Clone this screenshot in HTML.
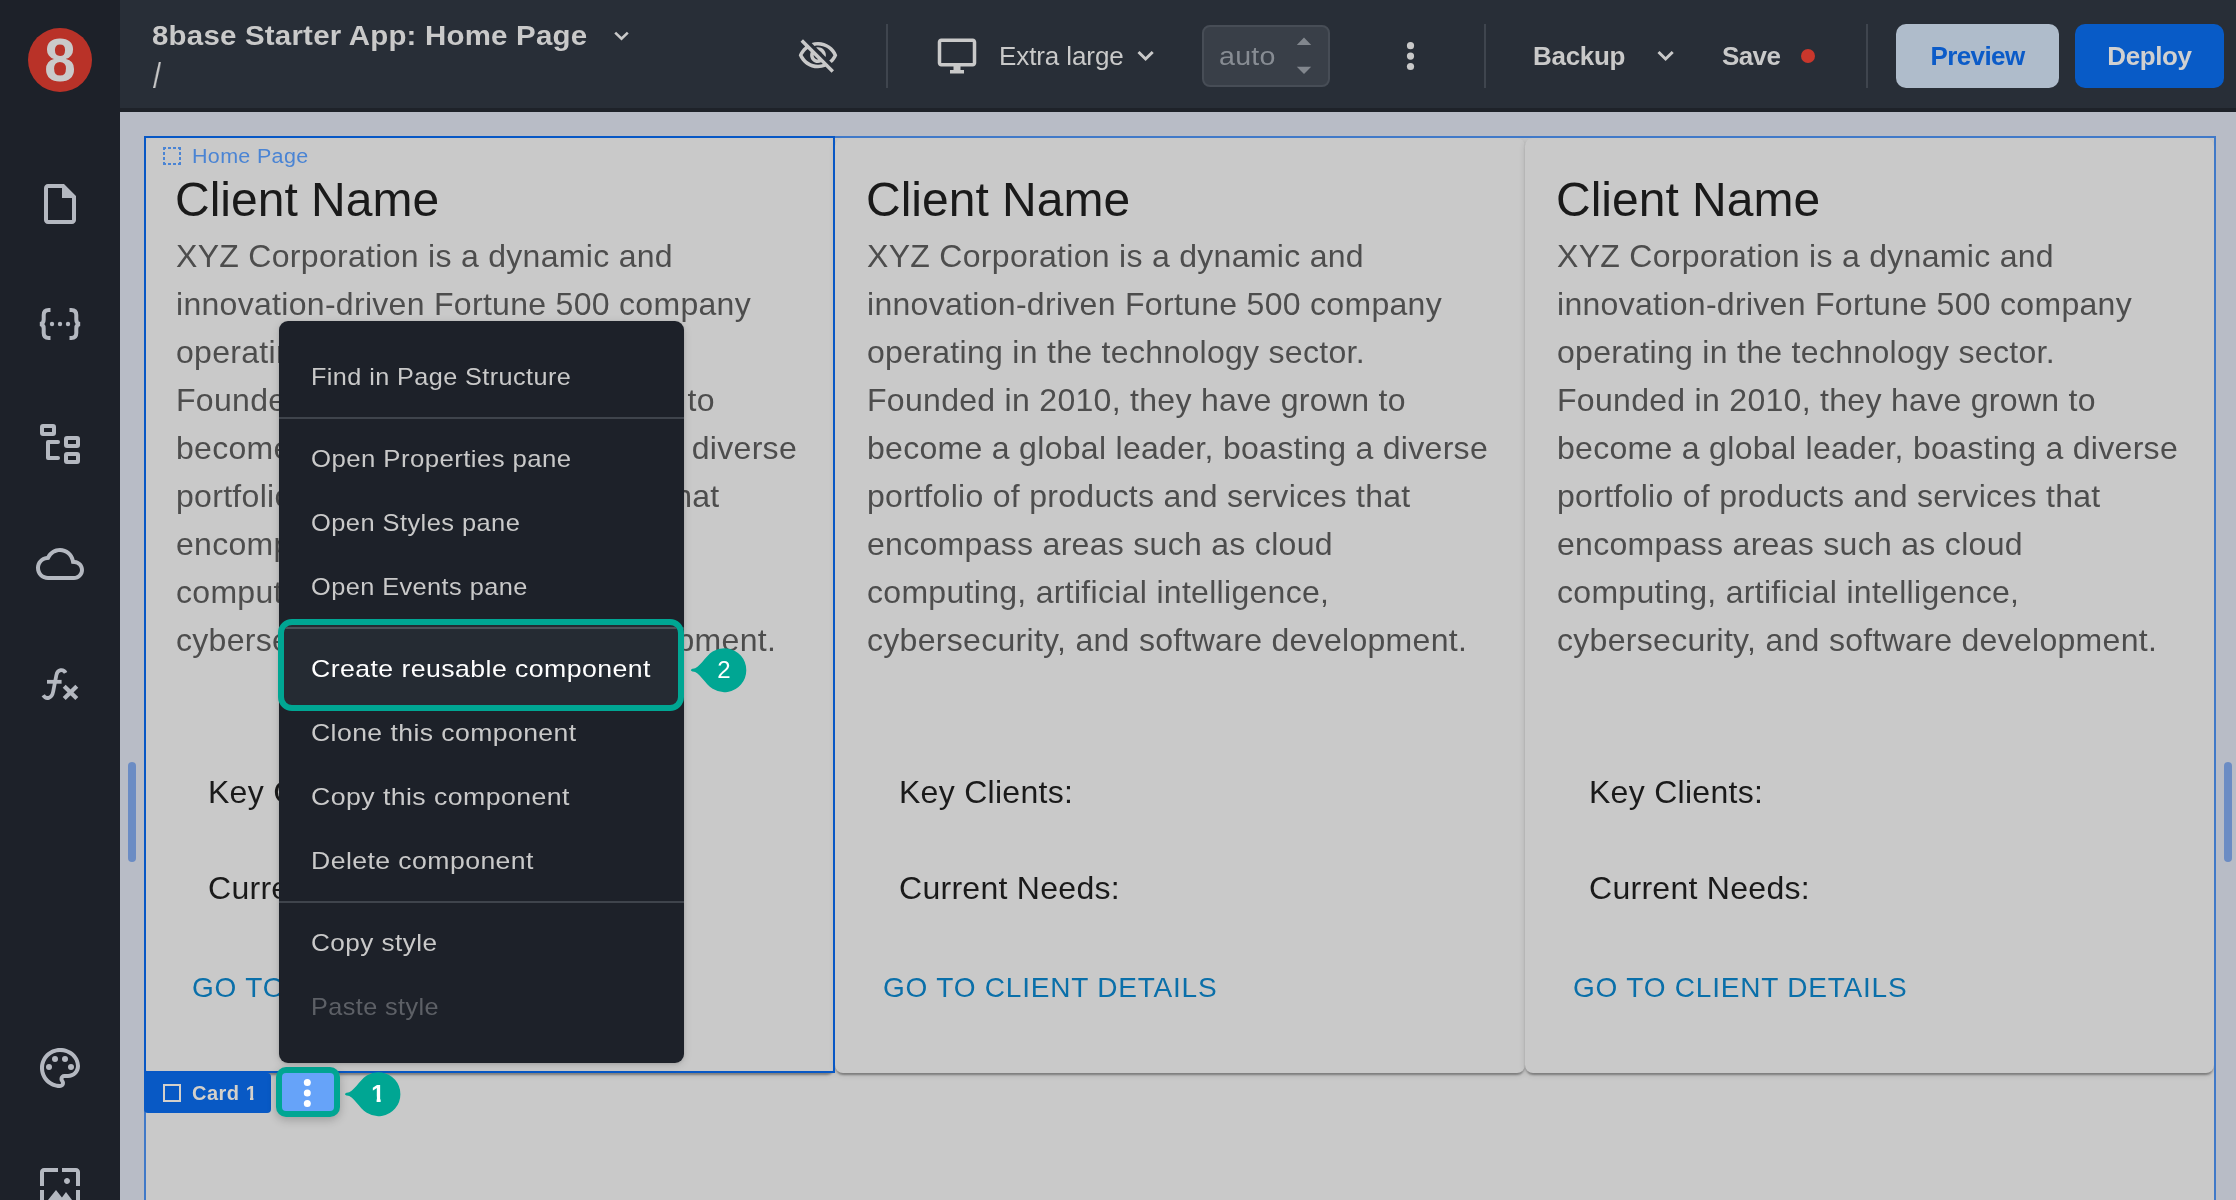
<!DOCTYPE html>
<html lang="en">
<head>
<meta charset="utf-8">
<title>8base Starter App: Home Page</title>
<style>
*{box-sizing:border-box;margin:0;padding:0}
html,body{width:2236px;height:1200px;overflow:hidden}
body{position:relative;background:#b8bcc6;font-family:"Liberation Sans",sans-serif;color:#c9c9c9}
#root{position:absolute;left:0;top:0;width:2236px;height:1200px;will-change:transform}
.abs{position:absolute}
svg{display:block;position:absolute;overflow:visible}
.t{position:absolute;white-space:nowrap;line-height:1}

/* sidebar */
#sidebar{position:absolute;left:0;top:0;width:120px;height:1200px;background:#1d2129}
#logo{position:absolute;left:28px;top:28px;width:64px;height:64px;border-radius:50%;background:#b93228}
#logo span{position:absolute;left:0;width:64px;text-align:center;top:1.5px;font-weight:bold;font-size:61px;line-height:61px;color:#cacaca;transform:scaleX(.93)}

/* topbar */
#topbar{position:absolute;left:120px;top:0;width:2116px;height:112px;background:#282e37;border-bottom:4px solid #1e2229}
.vdiv{position:absolute;top:24px;width:2px;height:64px;background:#3f454e}

/* canvas */
#page{position:absolute;left:144px;top:136px;width:2072px;height:1100px;background:#c9c9c9;border:2px solid #4079c8;overflow:hidden}
.card{position:absolute;top:0;height:935px;background:#c9c9c9;border-radius:8px;box-shadow:0 4px 2px -2px rgba(0,0,0,.2),0 2px 2px 0 rgba(0,0,0,.15),0 2px 6px 0 rgba(0,0,0,.12)}
.card h5{position:absolute;left:31px;top:34px;font-weight:normal;font-size:48px;line-height:56px;color:#1a1a1a;white-space:nowrap}
.card p.body{position:absolute;left:32px;top:94px;width:640px;font-size:32px;line-height:48px;letter-spacing:.3px;color:#4d4d4d;white-space:nowrap}
.card .kv{position:absolute;left:64px;font-size:32px;line-height:48px;letter-spacing:.28px;color:#1a1a1a;white-space:nowrap}
.card .btn{position:absolute;left:48px;top:826px;font-size:28px;line-height:48px;letter-spacing:.8px;color:#0a6fa9;white-space:nowrap}

.one{display:inline-block;line-height:1em;vertical-align:baseline;clip-path:polygon(0 0,.39em 0,.39em 1em,.22em 1em,.22em .6em,0 .6em)}
/* menu */
#menu{position:absolute;left:279px;top:321px;width:405px;height:742px;background:#1d2129;border-radius:9px;box-shadow:0 2px 8px rgba(0,0,0,.13),0 1px 3px rgba(0,0,0,.10);padding:24px 0}
#menu .mi{height:64px;padding-left:32px;font-size:24px;line-height:64px;letter-spacing:.4px;color:#c9c9c9;white-space:nowrap}
#menu .mi span,.hl span{display:inline-block;transform-origin:0 50%}
#menu .mi.dis{color:#5d6066}
#menu .sep{height:2px;margin:8px 0;background:#3f444c}
</style>
</head>
<body>
<div id="root">

<!-- ============ CANVAS ============ -->
<div id="page">

<div class="card" id="c1" style="left:-2px;width:691px">
  <h5>Client Name</h5>
  <p class="body">XYZ Corporation is a dynamic and<br>innovation-driven Fortune 500 company<br>operating in the technology sector.<br>Founded in 2010, they have grown to<br>become a global leader, boasting a diverse<br>portfolio of products and services that<br>encompass areas such as cloud<br>computing, artificial intelligence,<br>cybersecurity, and software development.</p>
  <div class="kv" style="top:630px">Key Clients:</div>
  <div class="kv" style="top:726px">Current Needs:</div>
  <div class="btn">GO TO CLIENT DETAILS</div>
</div>
<div class="card" id="c2" style="left:689px;width:690px">
  <h5>Client Name</h5>
  <p class="body">XYZ Corporation is a dynamic and<br>innovation-driven Fortune 500 company<br>operating in the technology sector.<br>Founded in 2010, they have grown to<br>become a global leader, boasting a diverse<br>portfolio of products and services that<br>encompass areas such as cloud<br>computing, artificial intelligence,<br>cybersecurity, and software development.</p>
  <div class="kv" style="top:630px">Key Clients:</div>
  <div class="kv" style="top:726px">Current Needs:</div>
  <div class="btn">GO TO CLIENT DETAILS</div>
</div>
<div class="card" id="c3" style="left:1379px;width:689px">
  <h5>Client Name</h5>
  <p class="body">XYZ Corporation is a dynamic and<br>innovation-driven Fortune 500 company<br>operating in the technology sector.<br>Founded in 2010, they have grown to<br>become a global leader, boasting a diverse<br>portfolio of products and services that<br>encompass areas such as cloud<br>computing, artificial intelligence,<br>cybersecurity, and software development.</p>
  <div class="kv" style="top:630px">Key Clients:</div>
  <div class="kv" style="top:726px">Current Needs:</div>
  <div class="btn">GO TO CLIENT DETAILS</div>
</div>

</div>
<!-- selection outline of card 1 -->
<div class="abs" style="left:144px;top:136px;width:691px;height:937px;border:2px solid #0757c5"></div>



<!-- resize handles -->
<div class="abs" style="left:128px;top:762px;width:8px;height:100px;border-radius:4px;background:#6b8cc4"></div>
<div class="abs" style="left:2224px;top:762px;width:8px;height:100px;border-radius:4px;background:#6b8cc4"></div>

<!-- page label -->
<svg style="left:163px;top:147px" width="18" height="18" viewBox="0 0 18 18" fill="none" stroke="#4a84d4" stroke-width="2" stroke-dasharray="3 2"><path d="M0 1H18"/><path d="M0 17H18"/><path d="M1 0V18"/><path d="M17 0V18"/></svg>
<div class="t" style="left:192px;top:144px;font-size:20px;line-height:24px;letter-spacing:.3px;color:#4a84d4;transform:scaleX(1.075);transform-origin:0 50%">Home Page</div>

<!-- ============ CARD LABEL ============ -->
<div class="abs" style="left:144px;top:1073px;width:127px;height:40px;background:#0859c5;border-radius:0 4px 4px 4px"></div>
<div class="abs" style="left:163px;top:1084px;width:18px;height:18px;border:2px solid #d4d0ca"></div>
<div class="t" style="left:192px;top:1081px;font-weight:bold;font-size:20px;line-height:24px;letter-spacing:.5px;color:#d4d0ca">Card <span class="one">1</span></div>

<!-- dots button highlighted (step 1) -->
<div class="abs" style="left:276px;top:1067px;width:64px;height:50px;border-radius:10px;background:#00a693;box-shadow:0 3px 10px rgba(0,0,0,.22)"></div>
<div class="abs" style="left:282px;top:1073px;width:52px;height:38px;border-radius:4px;background:#66a3f9"></div>
<svg style="left:300px;top:1076px" width="16" height="34" viewBox="0 0 16 34" fill="#ffffff"><circle cx="7.300" cy="6.500" r="3.500"/><circle cx="7.300" cy="17" r="3.500"/><circle cx="7.300" cy="27.500" r="3.500"/></svg>

<!-- badge 1 -->
<svg style="left:340px;top:1066px" width="66" height="56" viewBox="340 1066 66 56"><path fill="#00a693" d="M366.74 1075.54C359.10 1080.30 352.90 1093.50 346.40 1092.80Q343.50 1094.20 346.40 1095.60C352.90 1094.90 359.10 1108.10 366.74 1112.86A22 22 0 1 0 366.74 1075.54Z"/></svg>
<div class="t" style="left:356px;width:44px;text-align:center;top:1082px;font-size:24px;line-height:24px;color:#fff;font-weight:bold"><span class="one">1</span></div>

<!-- ============ CONTEXT MENU ============ -->
<div id="menu">
  <div class="mi"><span style="transform:scaleX(1.051)">Find in Page Structure</span></div>
  <div class="sep"></div>
  <div class="mi"><span style="transform:scaleX(1.073)">Open Properties pane</span></div>
  <div class="mi"><span style="transform:scaleX(1.061)">Open Styles pane</span></div>
  <div class="mi"><span style="transform:scaleX(1.056)">Open Events pane</span></div>
  <div class="sep"></div>
  <div class="mi" style="color:#fff"><span style="transform:scaleX(1.110)">Create reusable component</span></div>
  <div class="mi"><span style="transform:scaleX(1.106)">Clone this component</span></div>
  <div class="mi"><span style="transform:scaleX(1.111)">Copy this component</span></div>
  <div class="mi"><span style="transform:scaleX(1.108)">Delete component</span></div>
  <div class="sep"></div>
  <div class="mi"><span style="transform:scaleX(1.090)">Copy style</span></div>
  <div class="mi dis"><span style="transform:scaleX(1.051)">Paste style</span></div>
</div>

<!-- highlight (step 2) -->
<div class="abs" style="left:278px;top:619px;width:406px;height:92px;border:6px solid #00a693;border-radius:14px;background:#252b33;overflow:hidden">
  <div class="abs" style="left:0;top:2px;width:394px;height:2px;background:#4c5159"></div>
  <div class="t hl" style="left:27px;top:12px;font-size:24px;line-height:64px;letter-spacing:.4px;color:#fff"><span style="transform:scaleX(1.110)">Create reusable component</span></div>
</div>
<!-- badge 2 -->
<svg style="left:686px;top:642px" width="66" height="56" viewBox="686 642 66 56"><path fill="#00a693" d="M712.64 651.54C705.00 656.30 698.80 669.50 692.30 668.80Q689.40 670.20 692.30 671.60C698.80 670.90 705.00 684.10 712.64 688.86A22 22 0 1 0 712.64 651.54Z"/></svg>
<div class="t" style="left:702px;width:44px;text-align:center;top:658px;font-size:24px;line-height:24px;color:#fff">2</div>

<!-- ============ SIDEBAR / TOPBAR ============ -->
<div id="sidebar">
  <div id="logo"><span>8</span></div>
  <!-- file -->
  <svg style="left:36px;top:180px" width="48" height="48" viewBox="0 0 24 24" fill="#b4b8c0"><path d="M14 2H6c-1.1 0-1.990.9-1.990 2L4 20c0 1.100.89 2 1.990 2H18c1.100 0 2-.9 2-2V8l-6-6zM6 20V4h7v5h5v11H6z"/></svg>
  <!-- data object -->
  <svg style="left:0;top:0" width="120" height="1200" viewBox="0 0 120 1200" fill="none" stroke="#b4b8c0" stroke-width="4">
    <path d="M50.500 310H48.700Q43.700 310 43.700 315V319.500Q43.700 324 39.800 324Q43.700 324 43.700 328.500V333Q43.700 338 48.700 338H50.500"/>
    <path d="M69.500 310H71.300Q76.300 310 76.300 315V319.500Q76.300 324 80.200 324Q76.300 324 76.300 328.500V333Q76.300 338 71.300 338H69.500"/>
    <g fill="#b4b8c0" stroke="none"><circle cx="52" cy="324" r="2.200"/><circle cx="60" cy="324" r="2.200"/><circle cx="68" cy="324" r="2.200"/></g>
  </svg>
  <!-- tree -->
  <svg style="left:0;top:0" width="120" height="1200" viewBox="0 0 120 1200" fill="none" stroke="#b4b8c0" stroke-width="4" stroke-linejoin="round" stroke-linecap="round">
    <rect x="42" y="426" width="12" height="8" rx="1"/>
    <rect x="66" y="438" width="12" height="8" rx="1"/>
    <rect x="66" y="454" width="12" height="8" rx="1"/>
    <path d="M58 442H48V458H58"/>
  </svg>
  <!-- cloud -->
  <svg style="left:36px;top:540px" width="48" height="48" viewBox="0 0 24 24" fill="#b4b8c0"><path d="M12 6c2.620 0 4.880 1.860 5.390 4.430l.3 1.500 1.530.11c1.560.1 2.780 1.410 2.780 2.960 0 1.650-1.350 3-3 3H6c-2.210 0-4-1.790-4-4 0-2.050 1.530-3.760 3.560-3.970l1.070-.11.5-.95C8.080 7.140 9.940 6 12 6m0-2C9.110 4 6.600 5.640 5.350 8.040 2.340 8.360 0 10.910 0 14c0 3.310 2.690 6 6 6h13c2.760 0 5-2.240 5-5 0-2.640-2.050-4.780-4.650-4.960C18.670 6.590 15.640 4 12 4z"/></svg>
  <!-- fx -->
  <svg style="left:0;top:0" width="120" height="1200" viewBox="0 0 120 1200" fill="none" stroke="#b4b8c0" stroke-width="3.8">
    <path d="M65.600 672.800C63.500 668.800 57.600 669 56.400 675L53.200 691.500C51.800 699 46 699.600 43.200 695.200"/>
    <path d="M47 681.800H61.600"/>
    <path d="M64.200 686.200L76.800 698.600M76.800 686.200L64.200 698.600" stroke-width="4.200"/>
  </svg>
  <!-- palette -->
  <svg style="left:36px;top:1044px" width="48" height="48" viewBox="0 0 24 24" fill="#b4b8c0"><path d="M12 22C6.490 22 2 17.510 2 12S6.490 2 12 2s10 4.040 10 9c0 3.310-2.690 6-6 6h-1.770c-.28 0-.5.22-.5.5 0 .12.050.23.130.33.410.47.640 1.060.640 1.670A2.500 2.500 0 0 1 12 22zm0-18c-4.410 0-8 3.590-8 8s3.590 8 8 8c.28 0 .5-.22.500-.5a.54.54 0 0 0-.14-.35c-.41-.46-.63-1.050-.63-1.650a2.500 2.500 0 0 1 2.500-2.500H16c2.210 0 4-1.790 4-4 0-3.860-3.590-7-8-7z"/><circle cx="6.500" cy="11.500" r="1.500"/><circle cx="9.500" cy="7.500" r="1.500"/><circle cx="14.500" cy="7.500" r="1.500"/><circle cx="17.500" cy="11.500" r="1.500"/></svg>
  <!-- wallpaper -->
  <svg style="left:36px;top:1164px" width="48" height="48" viewBox="0 0 24 24" fill="#b4b8c0"><path d="M4 4h7V2H4c-1.100 0-2 .9-2 2v7h2V4zm6 9-4 5h12l-3-4-2.030 2.710L10 13zm7-4.500c0-.83-.67-1.500-1.500-1.500S14 7.670 14 8.500s.67 1.500 1.500 1.500S17 9.330 17 8.500zM20 2h-7v2h7v7h2V4c0-1.100-.9-2-2-2zm0 18h-7v2h7c1.100 0 2-.9 2-2v-7h-2v7zM4 13H2v7c0 1.100.9 2 2 2h7v-2H4v-7z"/></svg>
</div>
<div id="topbar">
  <div class="t" style="left:32px;top:20px;font-weight:bold;font-size:28px;line-height:32px;letter-spacing:.2px;color:#c9c9c9;transform:scaleX(1.052);transform-origin:0 50%">8base Starter App: Home Page</div>
  <svg style="left:493px;top:30px" width="18" height="12" viewBox="0 0 18 12" fill="none" stroke="#c9c9c9" stroke-width="2.600"><path d="M2.200 2.600L8.500 8.800L14.800 2.600"/></svg>
  <div class="t" style="left:33px;top:56px;font-size:35px;line-height:40px;color:#c9c9c9;transform:scaleX(.82);transform-origin:0 0">/</div>

  <!-- eye off -->
  <svg style="left:677px;top:35px" width="42" height="42" viewBox="0 0 24 24" fill="#c9c9c9"><path d="M12 6c3.790 0 7.170 2.130 8.820 5.500-.59 1.220-1.420 2.270-2.410 3.120l1.410 1.410c1.390-1.230 2.490-2.770 3.180-4.530C21.270 7.110 17 4 12 4c-1.270 0-2.490.2-3.640.57l1.650 1.650C10.660 6.090 11.320 6 12 6zm-1.070 1.140L13 9.210c.57.25 1.030.71 1.280 1.280l2.070 2.070c.08-.34.140-.7.140-1.070C16.500 9.010 14.480 7 12 7c-.37 0-.72.050-1.070.14zM2.010 3.870l2.680 2.680C3.060 7.830 1.770 9.530 1 11.500 2.730 15.890 7 19 12 19c1.520 0 2.980-.29 4.320-.82l3.420 3.420 1.410-1.410L3.420 2.450 2.010 3.870zm7.500 7.500 2.610 2.610c-.4.010-.8.020-.12.020-1.380 0-2.500-1.120-2.500-2.500 0-.5.010-.8.010-.13zm-3.400-3.400 1.750 1.750c-.23.550-.36 1.150-.36 1.780 0 2.480 2.020 4.500 4.500 4.500.63 0 1.230-.13 1.770-.36l.98.98c-.88.240-1.800.38-2.750.38-3.790 0-7.170-2.130-8.820-5.500.7-1.430 1.720-2.610 2.930-3.530z"/></svg>
  <div class="vdiv" style="left:766px"></div>
  <!-- monitor -->
  <svg style="left:816px;top:35px" width="42" height="42" viewBox="0 0 24 24" fill="#c9c9c9"><path d="M21 2H3c-1.100 0-2 .9-2 2v12c0 1.100.9 2 2 2h7v2H8v2h8v-2h-2v-2h7c1.100 0 2-.9 2-2V4c0-1.100-.9-2-2-2zm0 14H3V4h18v12z"/></svg>
  <div class="t" style="left:879px;top:40px;font-size:26px;line-height:32px;letter-spacing:-.1px;color:#c9c9c9">Extra large</div>
  <svg style="left:1016px;top:49px" width="20" height="14" viewBox="0 0 20 14" fill="none" stroke="#c9c9c9" stroke-width="3"><path d="M2.500 3L9.600 10L16.700 3"/></svg>
  <!-- auto box -->
  <div class="abs" style="left:1082px;top:25px;width:128px;height:62px;border-radius:8px;background:#393f48;border:2px solid #474d56"></div>
  <div class="t" style="left:1099px;top:40px;font-size:26px;line-height:32px;letter-spacing:.2px;color:#878c93;transform:scaleX(1.1);transform-origin:0 50%">auto</div>
  <svg style="left:1176px;top:37px" width="16" height="38" viewBox="0 0 16 38" fill="#82878e"><path d="M.8 8L8 .6L15.200 8Z"/><path d="M.8 29.700L8 37.100L15.200 29.700Z"/></svg>
  <!-- more vert -->
  <svg style="left:1283px;top:40px" width="16" height="32" viewBox="0 0 16 32" fill="#c9c9c9"><circle cx="7.500" cy="5.700" r="3.600"/><circle cx="7.500" cy="16.100" r="3.600"/><circle cx="7.500" cy="26.500" r="3.600"/></svg>
  <div class="vdiv" style="left:1364px"></div>
  <div class="t" style="left:1413px;top:40px;font-weight:bold;font-size:26px;line-height:32px;letter-spacing:-.3px;color:#c9c9c9">Backup</div>
  <svg style="left:1536px;top:49px" width="20" height="14" viewBox="0 0 20 14" fill="none" stroke="#c9c9c9" stroke-width="3"><path d="M2.500 3L9.600 10L16.700 3"/></svg>
  <div class="t" style="left:1602px;top:40px;font-weight:bold;font-size:26px;line-height:32px;letter-spacing:-.6px;color:#c9c9c9">Save</div>
  <div class="abs" style="left:1681px;top:49px;width:14px;height:14px;border-radius:50%;background:#c9372c"></div>
  <div class="vdiv" style="left:1746px"></div>
  <div class="abs" style="left:1776px;top:24px;width:163px;height:64px;border-radius:10px;background:#afbccb"></div>
  <div class="t" style="left:1776px;width:163px;text-align:center;top:40px;font-weight:bold;font-size:26px;line-height:32px;letter-spacing:-.6px;color:#0b5bc8">Preview</div>
  <div class="abs" style="left:1955px;top:24px;width:149px;height:64px;border-radius:10px;background:#085bc7"></div>
  <div class="t" style="left:1955px;width:149px;text-align:center;top:40px;font-weight:bold;font-size:26px;line-height:32px;letter-spacing:-.4px;color:#d0d0d0">Deploy</div>
</div>

</div>
</body>
</html>
